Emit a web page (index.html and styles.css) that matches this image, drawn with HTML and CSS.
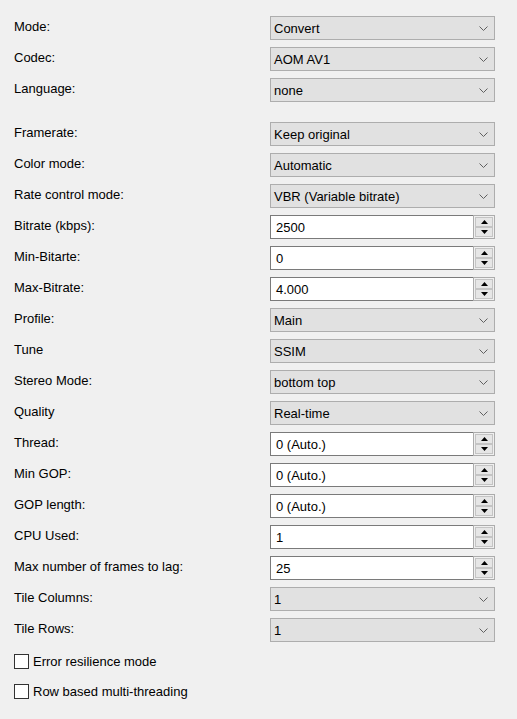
FILE: index.html
```html
<!DOCTYPE html>
<html>
<head>
<meta charset="utf-8">
<link rel="stylesheet" href="styles.css">
</head>
<body>
<div class="form">
  <div class="group">
    <div class="row"><div class="label">Mode:</div><div class="select"><span>Convert</span><svg class="chev" width="9" height="5" viewBox="0 0 9 5"><path d="M0.5 0.5 L4.5 4.5 L8.5 0.5" fill="none" stroke="#606060" stroke-width="1"/></svg></div></div>
    <div class="row"><div class="label">Codec:</div><div class="select"><span>AOM AV1</span><svg class="chev" width="9" height="5" viewBox="0 0 9 5"><path d="M0.5 0.5 L4.5 4.5 L8.5 0.5" fill="none" stroke="#606060" stroke-width="1"/></svg></div></div>
    <div class="row"><div class="label">Language:</div><div class="select"><span>none</span><svg class="chev" width="9" height="5" viewBox="0 0 9 5"><path d="M0.5 0.5 L4.5 4.5 L8.5 0.5" fill="none" stroke="#606060" stroke-width="1"/></svg></div></div>
  </div>
  <div class="group">
    <div class="row"><div class="label">Framerate:</div><div class="select"><span>Keep original</span><svg class="chev" width="9" height="5" viewBox="0 0 9 5"><path d="M0.5 0.5 L4.5 4.5 L8.5 0.5" fill="none" stroke="#606060" stroke-width="1"/></svg></div></div>
    <div class="row"><div class="label">Color mode:</div><div class="select"><span>Automatic</span><svg class="chev" width="9" height="5" viewBox="0 0 9 5"><path d="M0.5 0.5 L4.5 4.5 L8.5 0.5" fill="none" stroke="#606060" stroke-width="1"/></svg></div></div>
    <div class="row"><div class="label">Rate control mode:</div><div class="select"><span>VBR (Variable bitrate)</span><svg class="chev" width="9" height="5" viewBox="0 0 9 5"><path d="M0.5 0.5 L4.5 4.5 L8.5 0.5" fill="none" stroke="#606060" stroke-width="1"/></svg></div></div>
    <div class="row"><div class="label">Bitrate (kbps):</div><div class="spin"><div class="edit">2500</div><div class="btns"><div class="btn"><svg width="7" height="4" viewBox="0 0 7 4"><path d="M0 4 L3.5 0 L7 4 Z" fill="#000"/></svg></div><div class="btn"><svg width="7" height="4" viewBox="0 0 7 4"><path d="M0 0 L3.5 4 L7 0 Z" fill="#000"/></svg></div></div></div></div>
    <div class="row"><div class="label">Min-Bitarte:</div><div class="spin"><div class="edit">0</div><div class="btns"><div class="btn"><svg width="7" height="4" viewBox="0 0 7 4"><path d="M0 4 L3.5 0 L7 4 Z" fill="#000"/></svg></div><div class="btn"><svg width="7" height="4" viewBox="0 0 7 4"><path d="M0 0 L3.5 4 L7 0 Z" fill="#000"/></svg></div></div></div></div>
    <div class="row"><div class="label">Max-Bitrate:</div><div class="spin"><div class="edit">4.000</div><div class="btns"><div class="btn"><svg width="7" height="4" viewBox="0 0 7 4"><path d="M0 4 L3.5 0 L7 4 Z" fill="#000"/></svg></div><div class="btn"><svg width="7" height="4" viewBox="0 0 7 4"><path d="M0 0 L3.5 4 L7 0 Z" fill="#000"/></svg></div></div></div></div>
    <div class="row"><div class="label">Profile:</div><div class="select"><span>Main</span><svg class="chev" width="9" height="5" viewBox="0 0 9 5"><path d="M0.5 0.5 L4.5 4.5 L8.5 0.5" fill="none" stroke="#606060" stroke-width="1"/></svg></div></div>
    <div class="row"><div class="label">Tune</div><div class="select"><span>SSIM</span><svg class="chev" width="9" height="5" viewBox="0 0 9 5"><path d="M0.5 0.5 L4.5 4.5 L8.5 0.5" fill="none" stroke="#606060" stroke-width="1"/></svg></div></div>
    <div class="row"><div class="label">Stereo Mode:</div><div class="select"><span>bottom top</span><svg class="chev" width="9" height="5" viewBox="0 0 9 5"><path d="M0.5 0.5 L4.5 4.5 L8.5 0.5" fill="none" stroke="#606060" stroke-width="1"/></svg></div></div>
    <div class="row"><div class="label">Quality</div><div class="select"><span>Real-time</span><svg class="chev" width="9" height="5" viewBox="0 0 9 5"><path d="M0.5 0.5 L4.5 4.5 L8.5 0.5" fill="none" stroke="#606060" stroke-width="1"/></svg></div></div>
    <div class="row"><div class="label">Thread:</div><div class="spin"><div class="edit">0 (Auto.)</div><div class="btns"><div class="btn"><svg width="7" height="4" viewBox="0 0 7 4"><path d="M0 4 L3.5 0 L7 4 Z" fill="#000"/></svg></div><div class="btn"><svg width="7" height="4" viewBox="0 0 7 4"><path d="M0 0 L3.5 4 L7 0 Z" fill="#000"/></svg></div></div></div></div>
    <div class="row"><div class="label">Min GOP:</div><div class="spin"><div class="edit">0 (Auto.)</div><div class="btns"><div class="btn"><svg width="7" height="4" viewBox="0 0 7 4"><path d="M0 4 L3.5 0 L7 4 Z" fill="#000"/></svg></div><div class="btn"><svg width="7" height="4" viewBox="0 0 7 4"><path d="M0 0 L3.5 4 L7 0 Z" fill="#000"/></svg></div></div></div></div>
    <div class="row"><div class="label">GOP length:</div><div class="spin"><div class="edit">0 (Auto.)</div><div class="btns"><div class="btn"><svg width="7" height="4" viewBox="0 0 7 4"><path d="M0 4 L3.5 0 L7 4 Z" fill="#000"/></svg></div><div class="btn"><svg width="7" height="4" viewBox="0 0 7 4"><path d="M0 0 L3.5 4 L7 0 Z" fill="#000"/></svg></div></div></div></div>
    <div class="row"><div class="label">CPU Used:</div><div class="spin"><div class="edit">1</div><div class="btns"><div class="btn"><svg width="7" height="4" viewBox="0 0 7 4"><path d="M0 4 L3.5 0 L7 4 Z" fill="#000"/></svg></div><div class="btn"><svg width="7" height="4" viewBox="0 0 7 4"><path d="M0 0 L3.5 4 L7 0 Z" fill="#000"/></svg></div></div></div></div>
    <div class="row"><div class="label">Max number of frames to lag:</div><div class="spin"><div class="edit">25</div><div class="btns"><div class="btn"><svg width="7" height="4" viewBox="0 0 7 4"><path d="M0 4 L3.5 0 L7 4 Z" fill="#000"/></svg></div><div class="btn"><svg width="7" height="4" viewBox="0 0 7 4"><path d="M0 0 L3.5 4 L7 0 Z" fill="#000"/></svg></div></div></div></div>
    <div class="row"><div class="label">Tile Columns:</div><div class="select"><span>1</span><svg class="chev" width="9" height="5" viewBox="0 0 9 5"><path d="M0.5 0.5 L4.5 4.5 L8.5 0.5" fill="none" stroke="#606060" stroke-width="1"/></svg></div></div>
    <div class="row"><div class="label">Tile Rows:</div><div class="select"><span>1</span><svg class="chev" width="9" height="5" viewBox="0 0 9 5"><path d="M0.5 0.5 L4.5 4.5 L8.5 0.5" fill="none" stroke="#606060" stroke-width="1"/></svg></div></div>
  </div>
  <div class="checks">
    <div class="check"><span class="box"></span><span>Error resilience mode</span></div>
    <div class="check"><span class="box"></span><span>Row based multi-threading</span></div>
  </div>
</div>
</body>
</html>
```

FILE: styles.css
```css
html, body {
  margin: 0;
  padding: 0;
  background: #f0f0f0;
}
body {
  font-family: "Liberation Sans", Arial, sans-serif;
  font-size: 13px;
  color: #000;
  width: 517px;
  height: 719px;
  overflow: hidden;
}
.form {
  padding: 16px 0 0 14px;
  display: flex;
  flex-direction: column;
  gap: 20px;
}
.group {
  display: flex;
  flex-direction: column;
  gap: 7px;
}
.row {
  display: grid;
  grid-template-columns: 256px 225px;
  height: 24px;
}
.label {
  line-height: 15px;
  padding-top: 3px;
  white-space: nowrap;
}
.select {
  box-sizing: border-box;
  height: 24px;
  background: #e1e1e1;
  border: 1px solid #adadad;
  display: flex;
  align-items: center;
  justify-content: space-between;
  padding: 1px 6px 0 3px;
  line-height: 22px;
}
.chev {
  display: block;
  margin-top: 0;
}
.spin {
  display: flex;
  height: 24px;
}
.edit {
  flex: 1;
  box-sizing: border-box;
  height: 24px;
  background: #fff;
  border: 1px solid #7a7a7a;
  border-right: none;
  padding: 1px 0 0 5px;
  line-height: 21px;
}
.btns {
  box-sizing: border-box;
  width: 22px;
  height: 24px;
  border: 1px solid #acacac;
  background: #f0f0f0;
  display: flex;
  flex-direction: column;
  gap: 0;
  padding: 1px;
}
.btn {
  flex: 1;
  box-sizing: border-box;
  border: 1px solid #c4c4c4;
  background: #e6e6e6;
  display: flex;
  align-items: center;
  justify-content: center;
}
.btn svg {
  display: block;
}
.checks {
  display: flex;
  flex-direction: column;
  gap: 15px;
  margin-top: -8px;
}
.check {
  display: flex;
  align-items: center;
  gap: 4px;
  height: 15px;
  line-height: 15px;
}
.box {
  box-sizing: border-box;
  width: 15px;
  height: 15px;
  border: 1px solid #333;
  background: #fff;
}
```
